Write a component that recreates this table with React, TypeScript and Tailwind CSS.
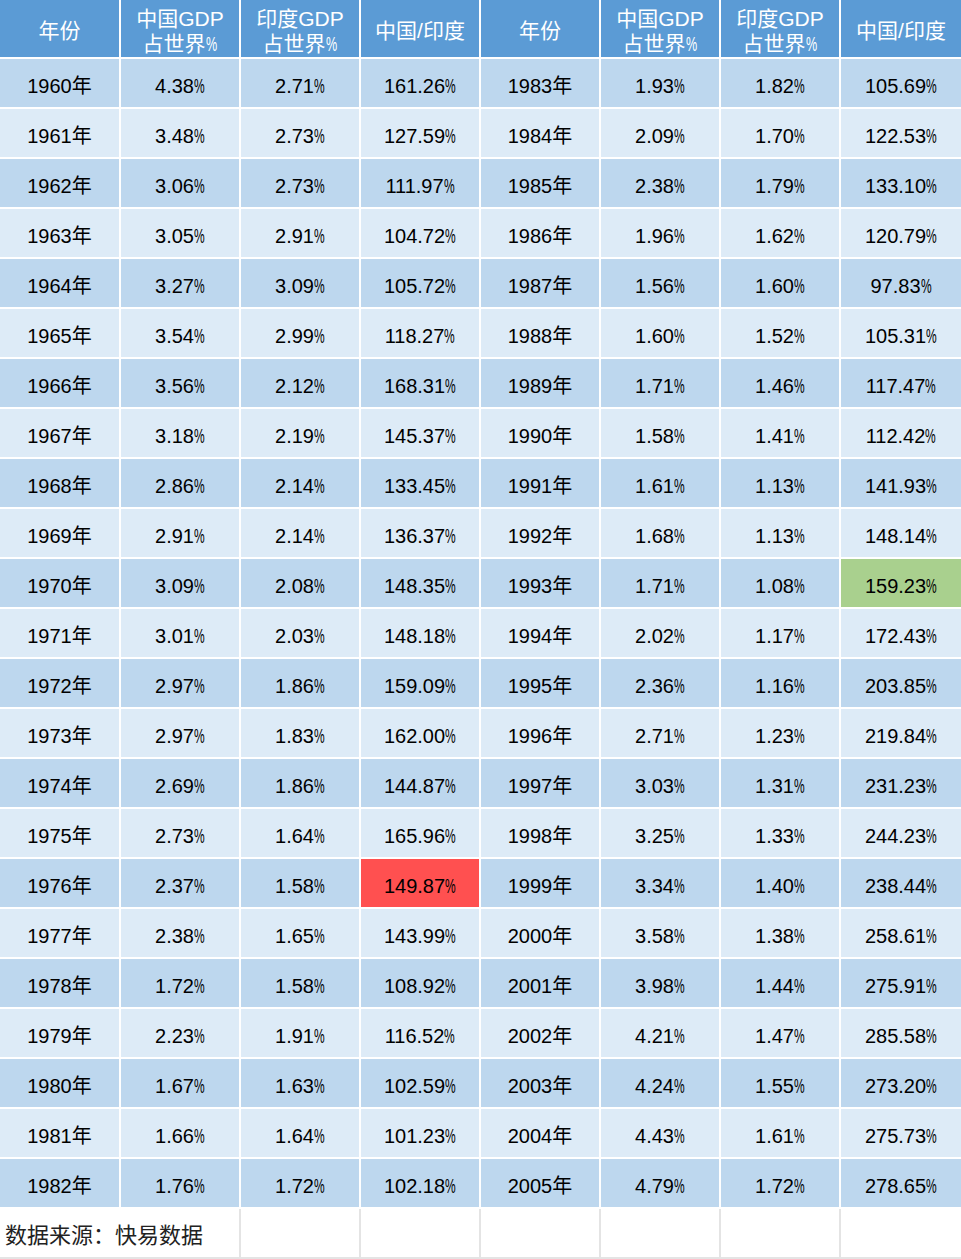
import React from 'react';

type Row = [string, string, string, string];

// 1960-1982 左半, 1983-2005 右半
const LEFT: Row[] = [
  ['1960', '4.38', '2.71', '161.26'],
  ['1961', '3.48', '2.73', '127.59'],
  ['1962', '3.06', '2.73', '111.97'],
  ['1963', '3.05', '2.91', '104.72'],
  ['1964', '3.27', '3.09', '105.72'],
  ['1965', '3.54', '2.99', '118.27'],
  ['1966', '3.56', '2.12', '168.31'],
  ['1967', '3.18', '2.19', '145.37'],
  ['1968', '2.86', '2.14', '133.45'],
  ['1969', '2.91', '2.14', '136.37'],
  ['1970', '3.09', '2.08', '148.35'],
  ['1971', '3.01', '2.03', '148.18'],
  ['1972', '2.97', '1.86', '159.09'],
  ['1973', '2.97', '1.83', '162.00'],
  ['1974', '2.69', '1.86', '144.87'],
  ['1975', '2.73', '1.64', '165.96'],
  ['1976', '2.37', '1.58', '149.87'],
  ['1977', '2.38', '1.65', '143.99'],
  ['1978', '1.72', '1.58', '108.92'],
  ['1979', '2.23', '1.91', '116.52'],
  ['1980', '1.67', '1.63', '102.59'],
  ['1981', '1.66', '1.64', '101.23'],
  ['1982', '1.76', '1.72', '102.18'],
];

const RIGHT: Row[] = [
  ['1983', '1.93', '1.82', '105.69'],
  ['1984', '2.09', '1.70', '122.53'],
  ['1985', '2.38', '1.79', '133.10'],
  ['1986', '1.96', '1.62', '120.79'],
  ['1987', '1.56', '1.60', '97.83'],
  ['1988', '1.60', '1.52', '105.31'],
  ['1989', '1.71', '1.46', '117.47'],
  ['1990', '1.58', '1.41', '112.42'],
  ['1991', '1.61', '1.13', '141.93'],
  ['1992', '1.68', '1.13', '148.14'],
  ['1993', '1.71', '1.08', '159.23'],
  ['1994', '2.02', '1.17', '172.43'],
  ['1995', '2.36', '1.16', '203.85'],
  ['1996', '2.71', '1.23', '219.84'],
  ['1997', '3.03', '1.31', '231.23'],
  ['1998', '3.25', '1.33', '244.23'],
  ['1999', '3.34', '1.40', '238.44'],
  ['2000', '3.58', '1.38', '258.61'],
  ['2001', '3.98', '1.44', '275.91'],
  ['2002', '4.21', '1.47', '285.58'],
  ['2003', '4.24', '1.55', '273.20'],
  ['2004', '4.43', '1.61', '275.73'],
  ['2005', '4.79', '1.72', '278.65'],
];

const font = "font-['Liberation_Sans','Noto_Sans_CJK_SC',sans-serif]";
const grid = 'grid grid-cols-[119px_repeat(6,118px)_1fr] gap-x-[2px]';

function Pct({ v }: { v: string }) {
  return (
    <span>
      {v}
      <span className="inline-block w-[11px] origin-left scale-x-[0.6] text-left">%</span>
    </span>
  );
}

function Cell({ children, bg }: { children: React.ReactNode; bg: string }) {
  return (
    <div className={`h-[48px] pt-[5px] flex items-center justify-center text-[20px] text-black ${bg}`}>
      {children}
    </div>
  );
}

function HeaderCell({ top, bottom }: { top: string; bottom?: string }) {
  return (
    <div className="h-[57px] pt-[4px] bg-[#5b9bd5] text-white text-[21px] leading-[25px] flex flex-col items-center justify-center">
      <span>{top}</span>
      {bottom && (
        <span>
          {bottom}
          <span className="inline-block w-[12px] origin-left scale-x-[0.6] text-left">%</span>
        </span>
      )}
    </div>
  );
}

export default function App() {
  const headers = (
    <>
      <HeaderCell top="年份" />
      <HeaderCell top="中国GDP" bottom="占世界" />
      <HeaderCell top="印度GDP" bottom="占世界" />
      <HeaderCell top="中国/印度" />
    </>
  );

  return (
    <div className={`w-[961px] h-[1259px] bg-white flex flex-col gap-y-[2px] ${font}`}>
      <div className={grid}>
        {headers}
        {headers}
      </div>

      {LEFT.map((l, i) => {
        const r = RIGHT[i];
        const bg = i % 2 === 0 ? 'bg-[#bdd7ee]' : 'bg-[#ddebf7]';
        return (
          <div key={l[0]} className={grid}>
            <Cell bg={bg}>{l[0]}年</Cell>
            <Cell bg={bg}><Pct v={l[1]} /></Cell>
            <Cell bg={bg}><Pct v={l[2]} /></Cell>
            <Cell bg={l[0] === '1976' ? 'bg-[#ff5050]' : bg}><Pct v={l[3]} /></Cell>
            <Cell bg={bg}>{r[0]}年</Cell>
            <Cell bg={bg}><Pct v={r[1]} /></Cell>
            <Cell bg={bg}><Pct v={r[2]} /></Cell>
            <Cell bg={r[0] === '1993' ? 'bg-[#a9d08e]' : bg}><Pct v={r[3]} /></Cell>
          </div>
        );
      })}

      {/* 数据来源 */}
      <div className={`${grid} bg-[#e4e4e4] pb-[2px]`}>
        <div className="col-span-2 h-[48px] pt-[4px] bg-white flex items-center pl-[5px] text-[22px] text-[#222]">
          数据来源：快易数据
        </div>
        <div className="bg-white" />
        <div className="bg-white" />
        <div className="bg-white" />
        <div className="bg-white" />
        <div className="bg-white" />
        <div className="bg-white" />
      </div>
    </div>
  );
}
